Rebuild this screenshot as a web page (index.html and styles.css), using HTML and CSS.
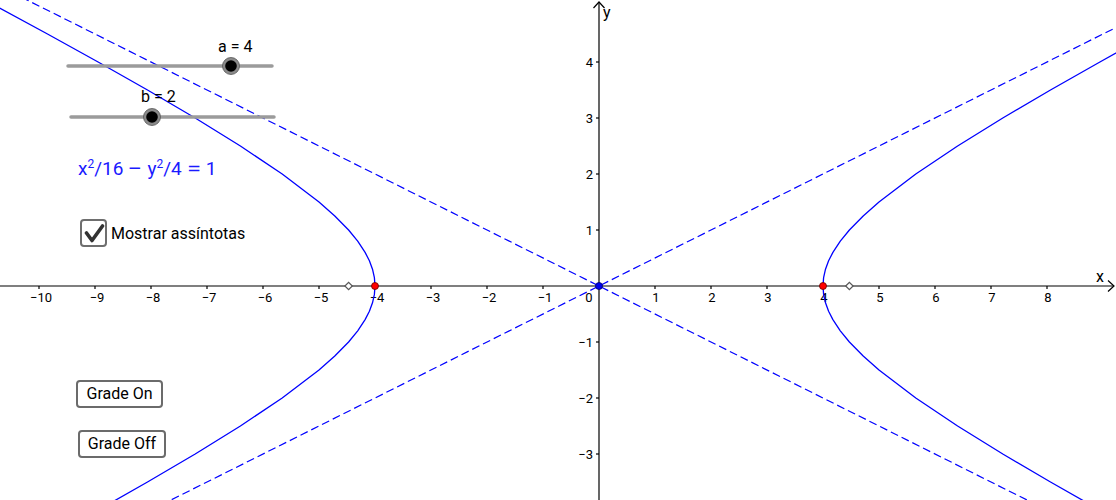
FILE: index.html
```html
<!DOCTYPE html>
<html lang="pt">
<head>
<meta charset="utf-8">
<title>Hipérbole</title>
<link rel="stylesheet" href="styles.css">
</head>
<body>
<div class="applet">
  <svg class="graph" width="1116" height="500" viewBox="0 0 1116 500">
    <!-- asymptotes -->
    <g class="asym">
      <line x1="0" y1="585.5" x2="1116" y2="27.5"/>
      <line x1="0" y1="-13.5" x2="1116" y2="544.5"/>
    </g>
    <!-- axes -->
    <g class="axis">
      <line x1="0" y1="286" x2="1114" y2="286"/>
      <polyline points="1108,280.5 1114,286 1108,291.5"/>
      <line x1="599" y1="500" x2="599" y2="2"/>
      <polyline points="593.5,8 599,2 604.5,8"/>
      <g class="ticks">
        <line x1="39" y1="286" x2="39" y2="289"/>
        <line x1="95" y1="286" x2="95" y2="289"/>
        <line x1="151" y1="286" x2="151" y2="289"/>
        <line x1="207" y1="286" x2="207" y2="289"/>
        <line x1="263" y1="286" x2="263" y2="289"/>
        <line x1="319" y1="286" x2="319" y2="289"/>
        <line x1="375" y1="286" x2="375" y2="289"/>
        <line x1="431" y1="286" x2="431" y2="289"/>
        <line x1="487" y1="286" x2="487" y2="289"/>
        <line x1="543" y1="286" x2="543" y2="289"/>
        <line x1="655" y1="286" x2="655" y2="289"/>
        <line x1="711" y1="286" x2="711" y2="289"/>
        <line x1="767" y1="286" x2="767" y2="289"/>
        <line x1="823" y1="286" x2="823" y2="289"/>
        <line x1="879" y1="286" x2="879" y2="289"/>
        <line x1="935" y1="286" x2="935" y2="289"/>
        <line x1="991" y1="286" x2="991" y2="289"/>
        <line x1="1047" y1="286" x2="1047" y2="289"/>
        <line x1="596" y1="62" x2="599" y2="62"/>
        <line x1="596" y1="118" x2="599" y2="118"/>
        <line x1="596" y1="174" x2="599" y2="174"/>
        <line x1="596" y1="230" x2="599" y2="230"/>
        <line x1="596" y1="342" x2="599" y2="342"/>
        <line x1="596" y1="398" x2="599" y2="398"/>
        <line x1="596" y1="454" x2="599" y2="454"/>
      </g>
    </g>
    <g class="xlabels">
      <text x="41" y="302">−10</text>
      <text x="97" y="302">−9</text>
      <text x="153" y="302">−8</text>
      <text x="209" y="302">−7</text>
      <text x="265" y="302">−6</text>
      <text x="321" y="302">−5</text>
      <text x="377" y="302">−4</text>
      <text x="433" y="302">−3</text>
      <text x="489" y="302">−2</text>
      <text x="545" y="302">−1</text>
      <text x="589" y="302">0</text>
      <text x="656" y="302">1</text>
      <text x="712" y="302">2</text>
      <text x="768" y="302">3</text>
      <text x="824" y="302">4</text>
      <text x="880" y="302">5</text>
      <text x="936" y="302">6</text>
      <text x="992" y="302">7</text>
      <text x="1048" y="302">8</text>
    </g>
    <g class="ylabels">
      <text x="593" y="66.5">4</text>
      <text x="593" y="122.5">3</text>
      <text x="593" y="178.5">2</text>
      <text x="593" y="234.5">1</text>
      <text x="593" y="346.5">−1</text>
      <text x="593" y="402.5">−2</text>
      <text x="593" y="458.5">−3</text>
    </g>
    <text class="axname" x="1096" y="282">x</text>
    <text class="axname" x="603" y="18">y</text>
    <!-- hyperbola -->
    <g class="hyp">
      <polyline points="1089.9,504.4 1050.5,482 1002.8,454 957.6,426 915.8,398 879,370 863.2,356 849.4,342 840.3,330.8 832.9,319.6 828.6,311.2 825.5,302.8 823.6,294.4 823,286 823.6,277.6 825.5,269.2 828.6,260.8 832.9,252.4 840.3,241.2 849.4,230 863.2,216 879,202 915.8,174 957.6,146 1002.8,118 1050.5,90 1099.9,62 1150.5,34"/>
      <polyline points="108.1,504.4 147.5,482 195.2,454 240.4,426 282.2,398 319,370 334.8,356 348.6,342 357.7,330.8 365.1,319.6 369.4,311.2 372.5,302.8 374.4,294.4 375,286 374.4,277.6 372.5,269.2 369.4,260.8 365.1,252.4 357.7,241.2 348.6,230 334.8,216 319,202 282.2,174 240.4,146 195.2,118 147.5,90 98.1,62 47.5,34 -4.1,6 -25,-5.2"/>
    </g>
    <!-- foci -->
    <g class="focus">
      <rect x="346" y="283.4" width="5.2" height="5.2" transform="rotate(45 348.6 286)"/>
      <rect x="846.8" y="283.4" width="5.2" height="5.2" transform="rotate(45 849.4 286)"/>
    </g>
    <!-- points -->
    <circle class="vertex" cx="375" cy="286" r="3.5"/>
    <circle class="vertex" cx="823" cy="286" r="3.5"/>
    <circle class="center" cx="599" cy="286" r="3.5"/>
    <!-- sliders -->
    <g class="slider">
      <line x1="68" y1="66" x2="272" y2="66"/>
      <line x1="71" y1="117" x2="274" y2="117"/>
    </g>
    <g class="knob">
      <circle class="halo" cx="231" cy="66" r="8.5"/>
      <circle class="dot" cx="231" cy="66" r="5.8"/>
      <circle class="halo" cx="152" cy="117" r="8.5"/>
      <circle class="dot" cx="152" cy="117" r="5.8"/>
    </g>
    <text class="slabel" x="218" y="51.5">a = 4</text>
    <text class="slabel" x="141" y="102">b = 2</text>
  </svg>

  <div class="eq">x<sup>2</sup>/16<span class="op">−</span>y<sup>2</sup>/4<span class="op">=</span>1</div>

  <label class="check">
    <span class="box">
      <svg width="22" height="22" viewBox="0 0 22 22"><polyline points="3.5,11 9,18.5 19.5,4" /></svg>
    </span>
    <span class="check-text">Mostrar assíntotas</span>
  </label>

  <button class="btn btn-on" type="button">Grade On</button>
  <button class="btn btn-off" type="button">Grade Off</button>
</div>
</body>
</html>
```

FILE: styles.css
```css
html, body {
  margin: 0;
  padding: 0;
  background: #ffffff;
}

.applet {
  position: relative;
  width: 1116px;
  height: 500px;
  overflow: hidden;
  font-family: Roboto, "Liberation Sans", sans-serif;
  background: #ffffff;
}

.graph {
  display: block;
}

.asym line {
  stroke: #0000ff;
  stroke-width: 1.2;
  stroke-dasharray: 8 4;
}

.axis line,
.axis polyline {
  stroke: #000000;
  stroke-width: 1.2;
  fill: none;
}

.xlabels text {
  font-family: Roboto, "Liberation Sans", sans-serif;
  font-size: 13px;
  fill: #000;
  text-anchor: middle;
}

.ylabels text {
  font-family: Roboto, "Liberation Sans", sans-serif;
  font-size: 13px;
  fill: #000;
  text-anchor: end;
}

.axname {
  font-family: Roboto, "Liberation Sans", sans-serif;
  font-size: 16px;
  fill: #000;
}

.hyp polyline {
  fill: none;
  stroke: #0000ff;
  stroke-width: 1.3;
  stroke-linejoin: round;
}

.focus rect {
  fill: #ffffff;
  stroke: #5a5a5a;
  stroke-width: 1.3;
}

.vertex {
  fill: #ff0000;
  stroke: #660000;
  stroke-width: 0.8;
}

.center {
  fill: #0000ee;
  stroke: #000066;
  stroke-width: 0.8;
}

.slider line {
  stroke: #9b9b9b;
  stroke-width: 3.5;
  stroke-linecap: round;
}

.knob .halo {
  fill: #8a8a8a;
  stroke: #555;
  stroke-width: 0.8;
}

.knob .dot {
  fill: #000000;
}

.slabel {
  font-family: Roboto, "Liberation Sans", sans-serif;
  font-size: 16px;
  fill: #000;
}

.eq {
  position: absolute;
  left: 78px;
  top: 157px;
  color: #1a1aff;
  font-size: 19px;
  line-height: 24px;
  white-space: nowrap;
  display: flex;
  align-items: baseline;
}

.eq sup {
  font-size: 12px;
  line-height: 0;
  vertical-align: 7px;
  position: relative;
  top: -7px;
}

.eq .op {
  display: inline-block;
  width: 14px;
  margin: 0 5px;
  text-align: center;
  transform: scaleX(1.35);
}

.check {
  position: absolute;
  left: 80px;
  top: 219px;
  display: flex;
  align-items: center;
  gap: 4px;
  cursor: pointer;
}

.box {
  width: 23px;
  height: 24px;
  border: 2px solid #6e6e6e;
  border-radius: 4px;
  background: #fff;
  display: flex;
  align-items: center;
  justify-content: center;
}

.box polyline {
  fill: none;
  stroke: #333333;
  stroke-width: 3.6;
  stroke-linecap: round;
  stroke-linejoin: round;
}

.check-text {
  font-size: 16px;
  color: #000;
}

.btn {
  position: absolute;
  height: 28px;
  padding: 0;
  background: #ffffff;
  border: 2px solid #6b6b6b;
  border-radius: 4px;
  font-family: Roboto, "Liberation Sans", sans-serif;
  font-size: 16px;
  color: #000;
  line-height: 24px;
  white-space: nowrap;
  text-align: center;
  box-sizing: border-box;
}

.btn-on {
  left: 76px;
  top: 380px;
  width: 87px;
}

.btn-off {
  left: 78px;
  top: 430px;
  width: 88px;
}
```
